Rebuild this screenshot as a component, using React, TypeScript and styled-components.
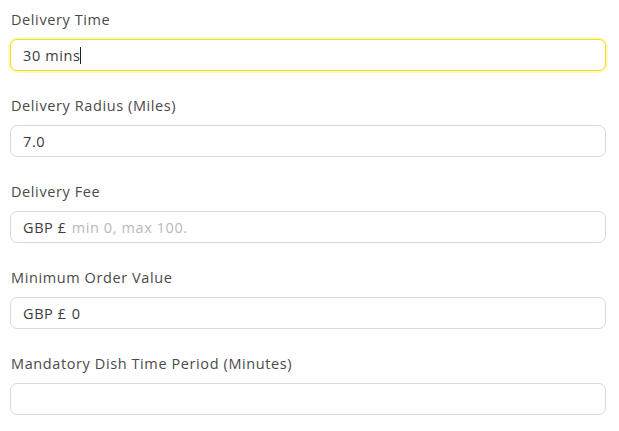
import styled, { createGlobalStyle } from "styled-components";

const GlobalStyle = createGlobalStyle`
    body {
        margin: 0;
        background: #ffffff;
        font-family: "Open Sans", "Noto Sans", sans-serif;
    }
`

const Form = styled.form`
    display: flex;
    flex-direction: column;
    gap: 25px;
    padding: 10px 13px 10px 10px;
`

const Group = styled.div`
    display: flex;
    flex-direction: column;
    gap: 9px;
`

const Label = styled.label`
    font-size: 14.5px;
    line-height: 20px;
    letter-spacing: 0.6px;
    color: #4a4a4a;
    padding-left: 1px;
`

const Box = styled.div<{ focused?: boolean }>`
    display: flex;
    align-items: center;
    height: 32px;
    box-sizing: border-box;
    padding: 0 12px;
    border-radius: 7px;
    border: 1px solid ${(props) => (props.focused ? "#f2dd1a" : "#d9d9d9")};
    box-shadow: ${(props) => (props.focused ? "0 0 0 2px rgba(250, 230, 60, 0.28)" : "none")};
    background: #ffffff;
    font-size: 14.5px;
    letter-spacing: 0.6px;
    color: #3c3c3c;
`

const Prefix = styled.span`
    margin-right: 5px;
    white-space: nowrap;
`

const Typed = styled.span`
    white-space: pre;
`

const Caret = styled.span`
    display: inline-block;
    width: 1px;
    height: 17px;
    background: #222;
`

const Input = styled.input`
    all: unset;
    flex: 1;
    font-family: "Open Sans", "Noto Sans", sans-serif;
    font-size: 14.5px;
    letter-spacing: 0.6px;
    color: #3c3c3c;
    &::placeholder {
        color: #b9b9b9;
    }
`

interface IField {
    label: string;
    prefix?: string;
    value?: string;
    placeholder?: string;
    focused?: boolean;
}

const fields: IField[] = [
    { label: "Delivery Time", value: "30 mins", focused: true },
    { label: "Delivery Radius (Miles)", value: "7.0" },
    { label: "Delivery Fee", prefix: "GBP £", placeholder: "min 0, max 100." },
    { label: "Minimum Order Value", prefix: "GBP £", value: "0" },
    { label: "Mandatory Dish Time Period (Minutes)" },
]

function Field({ label, prefix, value, placeholder, focused }: IField) {
    return (
        <Group>
            <Label>{label}</Label>
            <Box focused={focused}>
                {prefix ? <Prefix>{prefix}</Prefix> : null}
                {focused ? (
                    <>
                        <Typed>{value}</Typed>
                        <Caret />
                    </>
                ) : (
                    <Input defaultValue={value} placeholder={placeholder} />
                )}
            </Box>
        </Group>
    )
}

function App() {
    return (
        <>
            <GlobalStyle />
            <Form onSubmit={(e) => e.preventDefault()}>
                {fields.map((f) => (
                    <Field key={f.label} {...f} />
                ))}
            </Form>
        </>
    )
}

export default App;
